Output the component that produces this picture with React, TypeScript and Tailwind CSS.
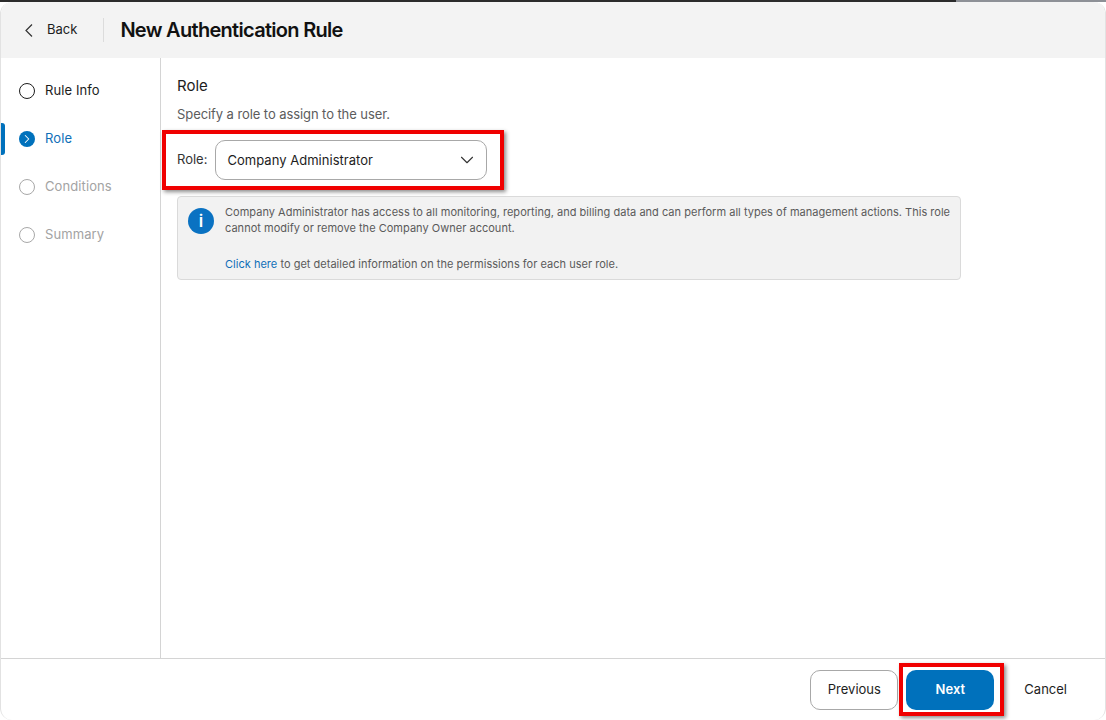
import { ChevronDown, ChevronRight } from "lucide-react";

function Step({ label, state }: { label: string; state: "done" | "active" | "todo" }) {
  const text = state === "active" ? "text-[#0f6fb8]" : state === "done" ? "text-[#1d1d1d]" : "text-[#a3a3a3]";

  return (
    <div className="relative flex h-12 items-center gap-[10px] pl-[18px]">
      {state === "active" ? (
        <>
          <div className="absolute left-0 top-[8px] h-8 w-[4px] rounded-r-[3px] bg-[#0071bc]" />
          <div className="flex h-4 w-4 items-center justify-center rounded-full bg-[#0071bc]">
            <ChevronRight size={14} strokeWidth={1.75} className="text-white" />
          </div>
        </>
      ) : (
        <div
          className={`h-4 w-4 rounded-full border-[1.5px] ${state === "done" ? "border-[#1d1d1d]" : "border-[#a8a8a8]"}`}
        />
      )}
      <span className={`text-[13px] tracking-[0.1px] ${text}`}>{label}</span>
    </div>
  );
}

export default function App() {
  return (
    <div className="relative h-[720px] w-[1106px] overflow-hidden bg-white font-['Inter','Liberation_Sans',sans-serif]">
      <div className="flex h-[2px]">
        <div className="w-[956px] bg-[#2b2b2b]" />
        <div className="flex-1 bg-[#8d9096]" />
      </div>

      <div className="flex h-[718px] flex-col rounded-xl border-x border-[#e2e2e2]">
        <header className="flex h-14 items-center rounded-t-xl bg-[#f3f3f3] pl-6">
          <svg width="8" height="13" viewBox="0 0 8 13" fill="none" stroke="#333333" strokeWidth="1.2">
            <path d="M7 0.5L1 6.5L7 12.5" />
          </svg>
          <span className="ml-[14px] text-[13px] text-[#1d1d1d]">Back</span>
          <div className="ml-[26px] h-6 w-px bg-[#dcdcdc]" />
          <h1 className="ml-4 text-[20px] font-semibold tracking-[-0.7px] text-[#111111]">New Authentication Rule</h1>
        </header>

        <div className="flex min-h-0 flex-1">
          <nav className="w-[160px] shrink-0 border-r border-[#d4d4d4] pt-[9px]">
            <Step label="Rule Info" state="done" />
            <Step label="Role" state="active" />
            <Step label="Conditions" state="todo" />
            <Step label="Summary" state="todo" />
          </nav>

          <main className="flex-1 pl-4 pt-[17px]">
            <h2 className="text-[15px] font-normal leading-[22px] text-[#1d1d1d]">Role</h2>
            <p className="mt-[7px] text-[13px] leading-5 tracking-[-0.08px] text-[#5c5c5c]">
              Specify a role to assign to the user.
            </p>

            <div className="mt-[16px] flex items-center gap-2">
              <span className="text-[13px] text-[#333333]">Role:</span>
              <div className="flex h-10 w-[272px] items-center justify-between rounded-[10px] border border-[#a8a8a8] pl-3 pr-2">
                <span className="-ml-px pt-px text-[13px] tracking-[0.03px] text-[#1d1d1d]">Company Administrator</span>
                <ChevronDown size={22} strokeWidth={1.2} className="text-[#333333]" />
              </div>
            </div>

            <div className="mt-4 flex h-[84px] w-[784px] gap-[11px] rounded-[4px] border border-[#dadada] bg-[#f2f2f2] pl-[10px] pt-[11px]">
              <div className="flex h-[26px] w-[26px] shrink-0 items-center justify-center rounded-full bg-[#0a72c2] text-[17px] font-semibold leading-none text-white">
                i
              </div>
              <div className="text-[11px] leading-4 tracking-[0.02px] text-[#5a5a5a]">
                <p className="-mt-[4px] w-[730px]">
                  Company Administrator has access to all monitoring, reporting, and billing data and can perform all types of management actions. This role cannot modify or remove the Company Owner account.
                </p>
                <p className="mt-[20px]">
                  <span className="text-[#0f6fb8]">Click here</span> to get detailed information on the permissions for each user role.
                </p>
              </div>
            </div>
          </main>
        </div>

        <footer className="flex h-[62px] shrink-0 items-center justify-end border-t border-[#d4d4d4] pr-[38px]">
          <button className="h-10 w-[88px] rounded-[10px] border border-[#a8a8a8] bg-white pt-px text-[13px] text-[#1d1d1d]">
            Previous
          </button>
          <button className="ml-2 h-10 w-[88px] rounded-[10px] bg-[#0071bc] pt-px text-[13px] font-semibold text-white">
            Next
          </button>
          <span className="ml-[30px] pt-px text-[13px] text-[#1d1d1d]">Cancel</span>
        </footer>
      </div>

      {/* red callouts drawn over the screenshot */}
      <div className="absolute left-[162px] top-[130px] h-[60px] w-[342px] border-4 border-[#f00000] shadow-[2px_2px_4px_rgba(0,0,0,0.45)]" />
      <div className="absolute left-[899px] top-[663px] h-[53px] w-[105px] border-4 border-[#f00000] shadow-[2px_2px_4px_rgba(0,0,0,0.45)]" />
    </div>
  );
}
